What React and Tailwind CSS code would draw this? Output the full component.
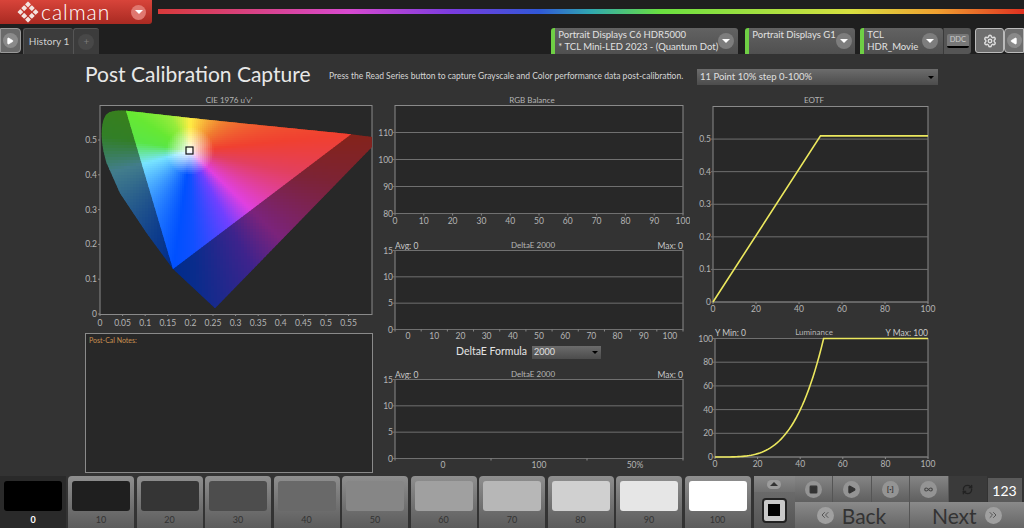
import { Square, Play, Infinity as InfinityIcon, RefreshCw, ChevronsLeft, ChevronsRight, Settings } from 'lucide-react';

const FONT = 'font-["Lato","Liberation_Sans",sans-serif]';

// hue stops around the white point, angle in degrees from +x going clockwise on screen
const WX = 90;
const WY = 45;
const HUES = [
  [-148, [102, 232, 51]],
  [-120, [150, 236, 60]],
  [-90, [255, 238, 68]],
  [-40, [240, 125, 48]],
  [-6, [240, 64, 48]],
  [12, [226, 64, 96]],
  [44, [224, 64, 224]],
  [62, [112, 64, 255]],
  [88, [16, 80, 255]],
  [98, [0, 80, 255]],
  [165, [120, 228, 255]],
  [190, [90, 230, 70]],
  [212, [102, 232, 51]],
];

function colorAt(x, y, dim) {
  const dx = x - WX;
  const dy = y - WY;
  let a = (Math.atan2(dy, dx) * 180) / Math.PI;
  if (a < -148) a += 360;
  let c = HUES[0][1];
  for (let i = 0; i < HUES.length - 1; i++) {
    const [a1, c1] = HUES[i];
    const [a2, c2] = HUES[i + 1];
    if (a >= a1 && a <= a2) {
      const t = (a - a1) / (a2 - a1);
      c = c1.map((v, k) => v + (c2[k] - v) * t);
    }
  }
  const f = Math.min(1, Math.hypot(dx, dy) / 24);
  const rgb = c.map((v) => Math.round((255 + (v - 255) * f) * dim));
  return `rgb(${rgb.join(',')})`;
}

function cells(x0, y0, x1, y1, step, dim) {
  const out = [];
  for (let y = y0; y < y1; y += step) {
    for (let x = x0; x < x1; x += step) {
      out.push(<rect key={x + '-' + y} x={x} y={y} width={step + 0.5} height={step + 0.5} fill={colorAt(x + step / 2, y + step / 2, dim)} />);
    }
  }
  return out;
}

const LOCUS = 'M73 163 L46.7 127.3 L20 87.3 L6.7 57.3 C3 45 1.5 35 1.7 27 C2 14 5 8 10 6 C15 4.5 20 4.5 26 4.7 L93 12.3 L251 28.3 L272 31 L272 41 L115 202.3 Z';
const GAMUT = 'M26 4.7 L93 12.3 L251 28.3 L73 163 Z';

function CieChart() {
  const x = (v) => 15 + v * 452;
  const y = (v) => 220 - v * 348;
  return (
    <svg width="288" height="239" className="block shrink-0">
      <text x="144" y="9" textAnchor="middle" fontSize="8" fill="#b5b5b5">CIE 1976 u'v'</text>
      <rect x="15" y="11.5" width="272" height="209" fill="#282828" stroke="#8a8a8a" />
      <defs>
        <clipPath id="locus"><path d={LOCUS} /></clipPath>
        <clipPath id="gamut"><path d={GAMUT} /></clipPath>
      </defs>
      <g transform="translate(15 12)">
        <g clipPath="url(#locus)">{cells(0, 0, 272, 206, 3, 0.55)}</g>
        <g clipPath="url(#gamut)">{cells(24, 2, 252, 166, 2, 1)}</g>
        <rect x="86" y="41" width="7" height="7" fill="none" stroke="#111" strokeWidth="1.2" />
      </g>
      {[0, 0.1, 0.2, 0.3, 0.4, 0.5].map((v) => (
        <g key={v}>
          <line x1="13" x2="15" y1={y(v)} y2={y(v)} stroke="#8a8a8a" />
          <text x="12" y={y(v) + 3} textAnchor="end" fontSize="8.5" fill="#b5b5b5">{v}</text>
        </g>
      ))}
      {[0, 0.05, 0.1, 0.15, 0.2, 0.25, 0.3, 0.35, 0.4, 0.45, 0.5, 0.55].map((v) => (
        <g key={v}>
          <line x1={x(v)} x2={x(v)} y1="220" y2="222" stroke="#8a8a8a" />
          <text x={x(v)} y="232" textAnchor="middle" fontSize="8.5" fill="#b5b5b5">{v}</text>
        </g>
      ))}
    </svg>
  );
}

function Chart({ w, h, left, right, top, bottom, title, titleX, titleY, yMin, yMax, yTicks, xMin = 0, xMax = 100, xTicks, cats, curve, noteL, noteR }) {
  const px = (v) => left + ((v - xMin) / (xMax - xMin)) * (right - left);
  const py = (v) => bottom - ((v - yMin) / (yMax - yMin)) * (bottom - top);
  const cw = cats ? (right - left) / cats.length : 0;
  return (
    <svg width={w} height={h} className="block shrink-0">
      <text x={titleX} y={titleY} textAnchor="middle" fontSize="8" fill="#b5b5b5">{title}</text>
      {noteL && <text x={left} y={titleY + 1} fontSize="8.5" fill="#c8c8c8">{noteL}</text>}
      {noteR && <text x={right} y={titleY + 1} textAnchor="end" fontSize="8.5" fill="#c8c8c8">{noteR}</text>}
      <rect x={left} y={top} width={right - left} height={bottom - top} fill="#282828" stroke="#8a8a8a" />
      {yTicks.map((v) => (
        <g key={v}>
          <line x1={left - 2} x2={right} y1={py(v)} y2={py(v)} stroke="#707070" />
          <text x={left - 2} y={py(v) + 3} textAnchor="end" fontSize="8.5" fill="#b5b5b5">{v}</text>
        </g>
      ))}
      {xTicks && xTicks.map((v) => (
        <g key={v}>
          <line x1={px(v)} x2={px(v)} y1={bottom} y2={bottom + 2} stroke="#8a8a8a" />
          <text x={px(v)} y={bottom + 10} textAnchor="middle" fontSize="8.5" fill="#b5b5b5">{v}</text>
        </g>
      ))}
      {cats && cats.map((c, i) => (
        <g key={c}>
          <line x1={left + cw * i} x2={left + cw * i} y1={bottom} y2={bottom + 2} stroke="#8a8a8a" />
          <text x={left + cw * (i + 0.5)} y={bottom + 9} textAnchor="middle" fontSize="8.5" fill="#b5b5b5">{c}</text>
        </g>
      ))}
      {cats && <line x1={right} x2={right} y1={bottom} y2={bottom + 2} stroke="#8a8a8a" />}
      {curve && (
        <polyline points={curve.map(([a, b]) => `${px(a)},${py(b)}`).join(' ')} fill="none" stroke="#ece85e" strokeWidth="1.6" />
      )}
    </svg>
  );
}

const lum = [];
for (let i = 0; i <= 51; i++) lum.push([i, 100 * Math.pow(i / 51, 3.8)]);
lum.push([100, 100]);

const X_TICKS = [0, 10, 20, 30, 40, 50, 60, 70, 80, 90, 100];

function CalmanLogo() {
  return (
    <svg width="22" height="22" viewBox="0 0 22 22" className="shrink-0">
      <g transform="rotate(45 11 11)" fill="#f4e4e0">
        {[3.5, 8.9, 14.3].map((a) =>
          [3.5, 8.9, 14.3].map((b) => <rect key={a + '-' + b} x={a} y={b} width="4.2" height="4.2" rx="0.5" fill={a === 8.9 && b === 8.9 ? '#c9362c' : '#f4e4e0'} />)
        )}
      </g>
    </svg>
  );
}

function RoundDown() {
  return (
    <span className="flex h-[16px] w-[16px] shrink-0 items-center justify-center rounded-full bg-[#7d7d7d]">
      <span className="h-0 w-0 border-x-[4px] border-t-[4px] border-x-transparent border-t-white" />
    </span>
  );
}

function Device({ width, lines }) {
  return (
    <div style={{ width }} className="flex h-[26px] shrink-0 items-center rounded-t-[3px] border-l-[4px] border-[#6fcf45] bg-gradient-to-b from-[#626262] to-[#505050] pr-[5px] pl-[3px] text-[9.5px] leading-[12px] text-[#e2e2e2]">
      <div className="flex-1 self-start pt-[1px] whitespace-nowrap">
        {lines.map((l) => <div key={l}>{l}</div>)}
      </div>
      <RoundDown />
    </div>
  );
}

function Dropdown({ className, children }) {
  return (
    <div className={'flex items-center justify-between bg-gradient-to-b from-[#6c6c6c] to-[#4c4c4c] text-[#e0e0e0] ' + className}>
      <span>{children}</span>
      <span className="h-0 w-0 border-x-[3px] border-t-[3px] border-x-transparent border-t-black" />
    </div>
  );
}

const SWATCHES = [
  ['10', '#1f1f1f'], ['20', '#353535'], ['30', '#4d4d4d'], ['40', '#696969'], ['50', '#868686'],
  ['60', '#a0a0a0'], ['70', '#b7b7b7'], ['80', '#d0d0d0'], ['90', '#e6e6e6'], ['100', '#ffffff'],
];

function Swatch({ label, color }) {
  return (
    <div className="flex h-[52px] w-[66px] shrink-0 flex-col items-center rounded-t-[4px] bg-gradient-to-b from-[#8f8f8f] to-[#5c5c5c] px-[4px] pt-[5px]">
      <div style={{ backgroundColor: color }} className="h-[30px] w-full rounded-[3px]" />
      <span className="mt-[3px] text-[9px] leading-[12px] text-[#333]">{label}</span>
    </div>
  );
}

function SmallBtn({ icon: Icon, fill }) {
  return (
    <div className="flex h-[26px] w-[38.5px] shrink-0 items-center justify-center border-r border-[#555] bg-gradient-to-b from-[#858585] to-[#5f5f5f]">
      <span className="flex h-[17px] w-[17px] items-center justify-center rounded-full bg-[#949494]">
        <Icon size={9} strokeWidth={3} className={fill ? 'fill-[#333] text-[#333]' : 'text-[#444]'} />
      </span>
    </div>
  );
}

export default function App() {
  return (
    <div className={'flex h-[528px] w-[1024px] flex-col overflow-hidden bg-[#333333] ' + FONT}>
      {/* top bar */}
      <div className="flex h-[54px] shrink-0 flex-col bg-[#1f1f1f]">
        <div className="flex h-[24px] items-start">
          <div className="flex h-[24px] w-[152px] items-center rounded-br-[3px] bg-gradient-to-b from-[#d8443a] to-[#a92a22] pl-[17px] text-white">
            <CalmanLogo />
            <span className="ml-[2px] text-[21px] leading-[24px] font-light tracking-[1px]">calman</span>
            <span className="mr-[6px] ml-auto flex h-[15px] w-[15px] items-center justify-center rounded-full bg-[#e0776f]">
              <span className="h-0 w-0 border-x-[4px] border-t-[4px] border-x-transparent border-t-white" />
            </span>
          </div>
          <div className="mt-[9px] ml-[6px] h-[5px] flex-1 bg-[linear-gradient(90deg,#d83a3a_0%,#d84ad0_22%,#7a3ce0_34%,#3058d8_44%,#30a8b0_50%,#6ae040_58%,#d8e040_80%,#f0a030_90%,#e03020_100%)]" />
        </div>
        <div className="flex flex-1 items-end">
          <div className="mb-[1px] flex h-[25px] w-[21px] items-center justify-center rounded-r-[4px] border border-[#999] bg-[#6a6a6a]">
            <span className="flex h-[15px] w-[15px] items-center justify-center rounded-full bg-[#8a8a8a]">
              <Play size={8} className="fill-white text-white" />
            </span>
          </div>
          <div className="ml-[2px] flex h-[26px] w-[50px] items-center rounded-t-[3px] border-t border-l border-[#555] bg-[#3c3c3c] pl-[5px] text-[10px] text-[#cfcfcf]">History 1</div>
          <div className="flex h-[26px] w-[27px] items-center justify-center rounded-t-[3px] border-t border-l border-[#555] bg-[#3c3c3c] text-[10px] text-[#7a7a7a]">
            <span className="flex h-[16px] w-[16px] items-center justify-center rounded-full bg-[#484848]">+</span>
          </div>
          <div className="ml-[452px] flex items-end">
            <Device width={187} lines={['Portrait Displays C6 HDR5000', '* TCL Mini-LED 2023 - (Quantum Dot)']} />
            <div className="ml-[7px]">
              <Device width={110} lines={['Portrait Displays G1']} />
            </div>
            <div className="ml-[5px] flex">
              <Device width={83} lines={['TCL', 'HDR_Movie']} />
              <div className="flex h-[26px] w-[28px] items-center justify-center rounded-r-[3px] border-l border-[#3a3a3a] bg-[#555]">
                <span className="rounded-[2px] border-b-2 border-black bg-[#777] px-[3px] py-[1px] text-[7.5px] leading-[10px] text-[#ccc]">DDC</span>
              </div>
            </div>
          </div>
          <div className="mb-[1px] ml-[4px] flex h-[25px] w-[29px] items-center justify-center rounded-[3px] border border-[#bbb] bg-[#6e6e6e]">
            <Settings size={14} className="text-[#ddd]" strokeWidth={2.5} />
          </div>
          <div className="mb-[1px] flex h-[25px] w-[20px] items-center justify-center rounded-l-[4px] border border-[#bbb] bg-[#6e6e6e]">
            <span className="flex h-[15px] w-[15px] items-center justify-center rounded-full bg-[#8a8a8a]">
              <Play size={8} className="rotate-180 fill-white text-white" />
            </span>
          </div>
        </div>
      </div>

      {/* main area */}
      <div className="flex h-[40px] shrink-0 items-start pl-[85px]">
        <h1 className="mt-[7px] w-[244px] text-[21px] leading-[26px] font-normal whitespace-nowrap text-[#e8e8e8]">Post Calibration Capture</h1>
        <p className="mt-[16px] w-[368px] text-[8.5px] leading-[12px] whitespace-nowrap text-[#d5d5d5]">Press the Read Series button to capture Grayscale and Color performance data post-calibration.</p>
        <Dropdown className="mt-[15px] h-[16px] w-[241px] pr-[4px] pl-[3px] text-[9.5px]">11 Point 10% step 0-100%</Dropdown>
      </div>

      <div className="flex h-[382px] shrink-0 pl-[85px]">
        <div className="flex w-[288px] shrink-0 flex-col">
          <CieChart />
          <div className="h-[140px] border border-[#8a8a8a] bg-[#282828] pt-[1px] pl-[3px] text-[7px] leading-[10px] text-[#c89050]">Post-Cal Notes:</div>
        </div>

        <div className="ml-[2px] flex w-[315px] shrink-0 flex-col">
          <Chart w={315} h={132} left={20} right={308} top={11.5} bottom={119.5} title="RGB Balance" titleX={157} titleY={9} yMin={80} yMax={120} yTicks={[80, 90, 100, 110]} xTicks={X_TICKS} />
          <div className="mt-[14px]">
            <Chart w={315} h={102} left={20} right={308} top={10.5} bottom={89.5} title="DeltaE 2000" titleX={158} titleY={8} noteL="Avg: 0" noteR="Max: 0" yMin={0} yMax={15} yTicks={[0, 5, 10, 15]} cats={X_TICKS.map(String)} />
          </div>
          <div className="flex h-[20px] items-center pl-[81px]">
            <span className="text-[10.5px] text-[#e4e4e4]">DeltaE Formula</span>
            <Dropdown className="ml-[5px] h-[13px] w-[69px] pr-[3px] pl-[2px] text-[9px]">2000</Dropdown>
          </div>
          <div className="mt-[7px]">
            <Chart w={315} h={100} left={20} right={308} top={10.5} bottom={89.5} title="DeltaE 2000" titleX={158} titleY={8} noteL="Avg: 0" noteR="Max: 0" yMin={0} yMax={15} yTicks={[0, 5, 10, 15]} cats={['0', '100', '50%']} />
          </div>
        </div>

        <div className="flex w-[250px] shrink-0 flex-col">
          <Chart w={250} h={226} left={23} right={238} top={12.5} bottom={208} title="EOTF" titleX={124} titleY={9} yMin={0} yMax={0.6} yTicks={[0, 0.1, 0.2, 0.3, 0.4, 0.5]} xTicks={[0, 20, 40, 60, 80, 100]} curve={[[0, 0], [50, 0.51], [100, 0.51]]} />
          <div className="mt-[6px]">
            <Chart w={250} h={147} left={25} right={238} top={12.5} bottom={131} title="Luminance" titleX={124} titleY={9} noteL="Y Min: 0" noteR="Y Max: 100" yMin={0} yMax={100} yTicks={[0, 20, 40, 60, 80, 100]} xTicks={[0, 20, 40, 60, 80, 100]} curve={lum} />
          </div>
        </div>
      </div>

      {/* bottom bar */}
      <div className="flex h-[52px] shrink-0 items-stretch">
        <div className="flex w-[66px] shrink-0 flex-col items-center bg-[#2a2a2a] px-[4px] pt-[5px]">
          <div className="h-[30px] w-full rounded-[3px] bg-black" />
          <span className="mt-[3px] text-[9px] leading-[12px] font-bold text-white">0</span>
        </div>
        <div className="ml-[2px] flex gap-[2.5px]">
          {SWATCHES.map(([l, c]) => <Swatch key={l} label={l} color={c} />)}
        </div>
        <div className="ml-[3px] flex w-[41px] shrink-0 flex-col">
          <div className="flex h-[16px] items-center justify-center bg-gradient-to-b from-[#8a8a8a] to-[#707070]">
            <span className="flex h-[9px] w-[14px] items-center justify-center rounded-full bg-[#9c9c9c]">
              <span className="h-0 w-0 border-x-[4px] border-b-[4px] border-x-transparent border-b-[#333]" />
            </span>
          </div>
          <div className="flex flex-1 items-center justify-center bg-gradient-to-b from-[#6a6a6a] to-[#555]">
            <span className="flex h-[25px] w-[25px] items-center justify-center rounded-[4px] border-2 border-[#222] bg-[#c8c8c8]">
              <span className="h-[12px] w-[12px] bg-black" />
            </span>
          </div>
        </div>
        <div className="flex flex-1 flex-col">
          <div className="flex h-[26px] items-stretch">
            <SmallBtn icon={Square} fill />
            <SmallBtn icon={Play} fill />
            <div className="flex h-[26px] w-[38.5px] shrink-0 items-center justify-center border-r border-[#555] bg-gradient-to-b from-[#858585] to-[#5f5f5f]">
              <span className="flex h-[17px] w-[17px] items-center justify-center rounded-full bg-[#949494] text-[8px] leading-none font-bold text-[#333]">[·]</span>
            </div>
            <SmallBtn icon={InfinityIcon} />
            <div className="flex w-[38px] items-center justify-center bg-[#3a3a3a]">
              <RefreshCw size={11} strokeWidth={3} className="text-[#222]" />
            </div>
            <div className="ml-[1px] flex h-[24px] w-[34px] items-center justify-center self-end bg-[#5a5a5a] text-[14px] text-white">123</div>
          </div>
          <div className="flex flex-1">
            <div className="flex w-[115px] items-center justify-center gap-[8px] border-r border-[#555] bg-gradient-to-b from-[#8a8a8a] to-[#666] text-[21px] leading-none text-[#333]">
              <span className="flex h-[17px] w-[17px] items-center justify-center rounded-full bg-[#a0a0a0]">
                <ChevronsLeft size={12} className="text-[#555]" />
              </span>
              Back
            </div>
            <div className="flex flex-1 items-center justify-center gap-[8px] bg-gradient-to-b from-[#8a8a8a] to-[#666] text-[21px] leading-none text-[#333]">
              Next
              <span className="flex h-[17px] w-[17px] items-center justify-center rounded-full bg-[#a0a0a0]">
                <ChevronsRight size={12} className="text-[#555]" />
              </span>
            </div>
          </div>
        </div>
      </div>
    </div>
  );
}
